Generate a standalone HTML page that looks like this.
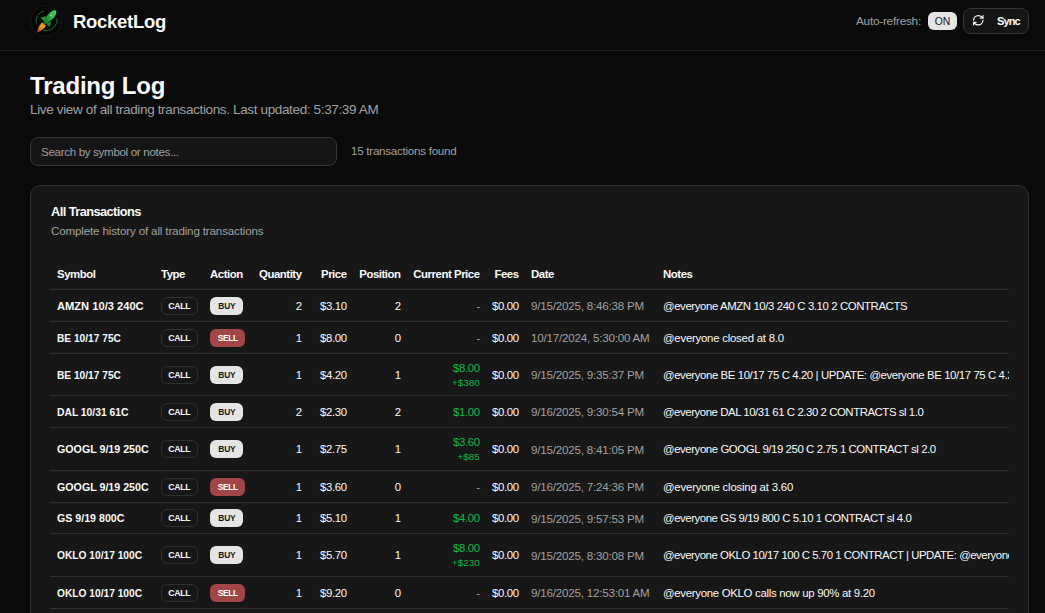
<!DOCTYPE html>
<html><head><meta charset="utf-8">
<style>
*{box-sizing:border-box;margin:0;padding:0}
html,body{width:1045px;height:613px;overflow:hidden;background:#0a0a0a;color:#fafafa;font-family:"Liberation Sans",sans-serif}
.abs{position:absolute;white-space:nowrap}
#hdr{position:absolute;left:0;top:0;width:1045px;height:51px;border-bottom:1px solid #222}
#logo{position:absolute;left:30px;top:5px;width:32px;height:32px}
#brand{left:73px;top:10px;font-size:18.5px;font-weight:700;line-height:24px;letter-spacing:-0.3px}
#auto{left:856px;top:13px;font-size:11.8px;color:#a1a1a1;line-height:16px;letter-spacing:-0.25px}
#on{position:absolute;left:928px;top:12px;width:29px;height:18px;border-radius:6px;background:#e5e5e5;color:#171717;font-size:10.4px;line-height:19px;text-align:center}
#sync{position:absolute;left:963px;top:8px;width:66px;height:26px;border-radius:8px;background:#151515;border:1px solid #343635}
#sync svg{position:absolute;left:8px;top:5px}
#sync span{position:absolute;left:33px;top:4px;font-size:11px;font-weight:700;line-height:16px;letter-spacing:-0.9px}
#title{left:30px;top:72px;font-size:24px;font-weight:700;line-height:28px;letter-spacing:-0.2px}
#sub{left:30px;top:101px;font-size:13.5px;color:#a1a1a1;line-height:18px;letter-spacing:-0.355px}
#search{position:absolute;left:30px;top:137px;width:307px;height:29px;border-radius:8px;background:#151515;border:1px solid #373938}
#search span{position:absolute;left:10px;top:7px;font-size:11.6px;color:#a1a1a1;line-height:14px;letter-spacing:-0.33px}
#found{left:351px;top:144px;font-size:11.6px;color:#a1a1a1;line-height:14px;letter-spacing:-0.26px}
#card{position:absolute;left:30px;top:185px;width:999px;height:600px;border-radius:11px;background:#171717;border:1px solid #303231}
#ct{left:51px;top:204px;font-size:12.8px;font-weight:700;line-height:16px;letter-spacing:-0.56px}
#cs{left:51px;top:224px;font-size:11.6px;color:#a1a1a1;line-height:14px;letter-spacing:-0.15px}
#tbl{position:absolute;left:50px;top:258px;width:959px;height:355px;overflow:hidden}
.row{position:absolute;left:0;width:959px;border-bottom:1px solid #2e302f}
.c{position:absolute;top:1px;bottom:1px;display:flex;align-items:center;white-space:nowrap;font-size:11.4px;letter-spacing:-0.38px}
.r{justify-content:flex-end;text-align:right}
.h .c{font-weight:700;font-size:11.4px;letter-spacing:-0.45px}
.sym{font-weight:700;font-size:11.8px;letter-spacing:0}
.sym b{display:inline-block;transform-origin:0 50%;font-weight:700}
.badge{display:inline-block;height:18px;line-height:18px;border-radius:6px;font-size:8.6px;text-align:center}
.call{width:37px;border:1px solid #303030;line-height:15px;font-weight:700;font-size:9.8px}
.call i{transform:scaleX(0.89)}
.buy{width:33px;background:#e5e5e5;color:#171717;font-size:9.8px;font-weight:700;line-height:17px}
.buy i{transform:scaleX(0.86)}
.sell{width:35px;background:#a24547;color:#fff;font-weight:700;font-size:9.8px;line-height:17px}
.sell i{transform:scaleX(0.85)}
.badge i{display:inline-block;font-style:normal}
.mut{color:#a1a1a1}
.dt{font-size:11.6px;letter-spacing:-0.21px}
.g{color:#12b84a}
.two{flex-direction:column;align-items:flex-end;justify-content:center}
.two .a{line-height:15px}
.two .b{font-size:9.8px;line-height:13px;letter-spacing:0}
</style></head><body>
<div id="hdr"></div>
<svg id="logo" viewBox="0 0 32 32">
  <defs>
    <linearGradient id="rb" x1="0" y1="1" x2="1" y2="0"><stop offset="0" stop-color="#126a22"/><stop offset="0.5" stop-color="#28a83e"/><stop offset="1" stop-color="#5cd06c"/></linearGradient>
    <linearGradient id="fl" x1="0" y1="1" x2="1" y2="0"><stop offset="0" stop-color="#b02a18"/><stop offset="0.45" stop-color="#e08a2c"/><stop offset="1" stop-color="#f0b848"/></linearGradient>
  </defs>
  <circle cx="16" cy="16" r="15.5" fill="#050706"/>
  <path d="M16 0.5 A15.5 15.5 0 0 0 16 31.5" fill="none" stroke="#2e1818" stroke-width="0.8"/>
  <path d="M16 0.5 A15.5 15.5 0 0 1 16 31.5" fill="none" stroke="#181830" stroke-width="0.8"/>
  <path d="M6.3 18.5 A10.5 10.5 0 0 1 14 6" fill="none" stroke="#16702a" stroke-width="1"/>
  <path d="M27 13 A10.8 10.8 0 0 1 12.5 24.8" fill="none" stroke="#16702a" stroke-width="1"/>
  <path d="M7 27.5 Q8 21.5 12 17.5 L16 20.5 Q13 25.5 7 27.5 Z" fill="url(#fl)"/>
  <path d="M10.5 13 L16 11 L14.5 16.5 Z" fill="#1e9834"/>
  <path d="M16 18.5 L21.5 16.5 L19.5 22 Z" fill="#18842c"/>
  <path d="M13 19.5 Q14.5 12.5 20 7.5 Q23.5 4.5 26 5.5 Q27 8 24.5 12 Q19.5 18 13 19.5 Z" fill="url(#rb)"/>
  <path d="M15 16 L22 9" stroke="#0d4a18" stroke-width="0.6" opacity="0.6"/>
  <circle cx="21" cy="10.5" r="1" fill="#a8e4ae"/>
</svg>
<div id="brand" class="abs">RocketLog</div>
<div id="auto" class="abs">Auto-refresh:</div>
<div id="on">ON</div>
<div id="sync">
  <svg width="12.5" height="12.5" viewBox="0 0 24 24" fill="none" stroke="#fafafa" stroke-width="2.3" stroke-linecap="round" stroke-linejoin="round"><path d="M3 12a9 9 0 0 1 9-9 9.75 9.75 0 0 1 6.74 2.74L21 8"/><path d="M21 3v5h-5"/><path d="M21 12a9 9 0 0 1-9 9 9.75 9.75 0 0 1-6.74-2.74L3 16"/><path d="M8 16H3v5"/></svg>
  <span>Sync</span>
</div>
<div id="title" class="abs">Trading Log</div>
<div id="sub" class="abs">Live view of all trading transactions. Last updated: 5:37:39 AM</div>
<div id="search"><span>Search by symbol or notes...</span></div>
<div id="found" class="abs">15 transactions found</div>
<div id="card"></div>
<div id="ct" class="abs">All Transactions</div>
<div id="cs" class="abs">Complete history of all trading transactions</div>
<div id="tbl">
<div class="row h" style="top:0px;height:32px"><div class="c" style="left:7px;width:98px">Symbol</div><div class="c" style="left:111px;width:43px">Type</div><div class="c" style="left:160px;width:41px">Action</div><div class="c r" style="left:201px;width:57px;padding-right:6.4px">Quantity</div><div class="c r" style="left:258px;width:45px;padding-right:6.4px">Price</div><div class="c r" style="left:303px;width:54px;padding-right:6.4px">Position</div><div class="c r" style="left:357px;width:79px;padding-right:6.4px">Current Price</div><div class="c r" style="left:436px;width:39px;padding-right:6.4px">Fees</div><div class="c" style="left:481px;width:126px">Date</div><div class="c" style="left:613px;width:600px">Notes</div></div>
<div class="row" style="top:32px;height:32px"><div class="c sym" style="left:7px;width:98px"><b style="transform:scaleX(0.944)">AMZN 10/3 240C</b></div><div class="c" style="left:111px;width:43px"><span class="badge call"><i>CALL</i></span></div><div class="c" style="left:160px;width:41px"><span class="badge buy"><i>BUY</i></span></div><div class="c r" style="left:201px;width:57px;padding-right:6.4px">2</div><div class="c r" style="left:258px;width:45px;padding-right:6.4px">$3.10</div><div class="c r" style="left:303px;width:54px;padding-right:6.4px">2</div><div class="c r mut" style="left:357px;width:79px;padding-right:6.4px">-</div><div class="c r" style="left:436px;width:39px;padding-right:6.4px">$0.00</div><div class="c mut dt" style="left:481px;width:126px">9/15/2025, 8:46:38 PM</div><div class="c" style="left:613px;width:600px"><span style="letter-spacing:-0.4px">@everyone AMZN 10/3 240 C 3.10 2 CONTRACTS</span></div></div>
<div class="row" style="top:64px;height:32px"><div class="c sym" style="left:7px;width:98px"><b style="transform:scaleX(0.862)">BE 10/17 75C</b></div><div class="c" style="left:111px;width:43px"><span class="badge call"><i>CALL</i></span></div><div class="c" style="left:160px;width:41px"><span class="badge sell"><i>SELL</i></span></div><div class="c r" style="left:201px;width:57px;padding-right:6.4px">1</div><div class="c r" style="left:258px;width:45px;padding-right:6.4px">$8.00</div><div class="c r" style="left:303px;width:54px;padding-right:6.4px">0</div><div class="c r mut" style="left:357px;width:79px;padding-right:6.4px">-</div><div class="c r" style="left:436px;width:39px;padding-right:6.4px">$0.00</div><div class="c mut dt" style="left:481px;width:126px">10/17/2024, 5:30:00 AM</div><div class="c" style="left:613px;width:600px"><span style="letter-spacing:-0.235px">@everyone closed at 8.0</span></div></div>
<div class="row" style="top:96px;height:42px"><div class="c sym" style="left:7px;width:98px"><b style="transform:scaleX(0.862)">BE 10/17 75C</b></div><div class="c" style="left:111px;width:43px"><span class="badge call"><i>CALL</i></span></div><div class="c" style="left:160px;width:41px"><span class="badge buy"><i>BUY</i></span></div><div class="c r" style="left:201px;width:57px;padding-right:6.4px">1</div><div class="c r" style="left:258px;width:45px;padding-right:6.4px">$4.20</div><div class="c r" style="left:303px;width:54px;padding-right:6.4px">1</div><div class="c r g two" style="left:357px;width:79px;padding-right:6.4px"><span class="a">$8.00</span><span class="b">+$380</span></div><div class="c r" style="left:436px;width:39px;padding-right:6.4px">$0.00</div><div class="c mut dt" style="left:481px;width:126px">9/15/2025, 9:35:37 PM</div><div class="c" style="left:613px;width:600px"><span style="letter-spacing:-0.4px">@everyone BE 10/17 75 C 4.20 | UPDATE: @everyone BE 10/17 75 C 4.20 2 CONTRACTS</span></div></div>
<div class="row" style="top:138px;height:32px"><div class="c sym" style="left:7px;width:98px"><b style="transform:scaleX(0.874)">DAL 10/31 61C</b></div><div class="c" style="left:111px;width:43px"><span class="badge call"><i>CALL</i></span></div><div class="c" style="left:160px;width:41px"><span class="badge buy"><i>BUY</i></span></div><div class="c r" style="left:201px;width:57px;padding-right:6.4px">2</div><div class="c r" style="left:258px;width:45px;padding-right:6.4px">$2.30</div><div class="c r" style="left:303px;width:54px;padding-right:6.4px">2</div><div class="c r g" style="left:357px;width:79px;padding-right:6.4px">$1.00</div><div class="c r" style="left:436px;width:39px;padding-right:6.4px">$0.00</div><div class="c mut dt" style="left:481px;width:126px">9/16/2025, 9:30:54 PM</div><div class="c" style="left:613px;width:600px"><span style="letter-spacing:-0.44px">@everyone DAL 10/31 61 C 2.30 2 CONTRACTS sl 1.0</span></div></div>
<div class="row" style="top:170px;height:43px"><div class="c sym" style="left:7px;width:98px"><b style="transform:scaleX(0.904)">GOOGL 9/19 250C</b></div><div class="c" style="left:111px;width:43px"><span class="badge call"><i>CALL</i></span></div><div class="c" style="left:160px;width:41px"><span class="badge buy"><i>BUY</i></span></div><div class="c r" style="left:201px;width:57px;padding-right:6.4px">1</div><div class="c r" style="left:258px;width:45px;padding-right:6.4px">$2.75</div><div class="c r" style="left:303px;width:54px;padding-right:6.4px">1</div><div class="c r g two" style="left:357px;width:79px;padding-right:6.4px"><span class="a">$3.60</span><span class="b">+$85</span></div><div class="c r" style="left:436px;width:39px;padding-right:6.4px">$0.00</div><div class="c mut dt" style="left:481px;width:126px">9/15/2025, 8:41:05 PM</div><div class="c" style="left:613px;width:600px"><span style="letter-spacing:-0.42px">@everyone GOOGL 9/19 250 C 2.75 1 CONTRACT sl 2.0</span></div></div>
<div class="row" style="top:213px;height:32px"><div class="c sym" style="left:7px;width:98px"><b style="transform:scaleX(0.904)">GOOGL 9/19 250C</b></div><div class="c" style="left:111px;width:43px"><span class="badge call"><i>CALL</i></span></div><div class="c" style="left:160px;width:41px"><span class="badge sell"><i>SELL</i></span></div><div class="c r" style="left:201px;width:57px;padding-right:6.4px">1</div><div class="c r" style="left:258px;width:45px;padding-right:6.4px">$3.60</div><div class="c r" style="left:303px;width:54px;padding-right:6.4px">0</div><div class="c r mut" style="left:357px;width:79px;padding-right:6.4px">-</div><div class="c r" style="left:436px;width:39px;padding-right:6.4px">$0.00</div><div class="c mut dt" style="left:481px;width:126px">9/16/2025, 7:24:36 PM</div><div class="c" style="left:613px;width:600px"><span style="letter-spacing:-0.2px">@everyone closing at 3.60</span></div></div>
<div class="row" style="top:245px;height:31px"><div class="c sym" style="left:7px;width:98px"><b style="transform:scaleX(0.902)">GS 9/19 800C</b></div><div class="c" style="left:111px;width:43px"><span class="badge call"><i>CALL</i></span></div><div class="c" style="left:160px;width:41px"><span class="badge buy"><i>BUY</i></span></div><div class="c r" style="left:201px;width:57px;padding-right:6.4px">1</div><div class="c r" style="left:258px;width:45px;padding-right:6.4px">$5.10</div><div class="c r" style="left:303px;width:54px;padding-right:6.4px">1</div><div class="c r g" style="left:357px;width:79px;padding-right:6.4px">$4.00</div><div class="c r" style="left:436px;width:39px;padding-right:6.4px">$0.00</div><div class="c mut dt" style="left:481px;width:126px">9/15/2025, 9:57:53 PM</div><div class="c" style="left:613px;width:600px"><span style="letter-spacing:-0.435px">@everyone GS 9/19 800 C 5.10 1 CONTRACT sl 4.0</span></div></div>
<div class="row" style="top:276px;height:43px"><div class="c sym" style="left:7px;width:98px"><b style="transform:scaleX(0.865)">OKLO 10/17 100C</b></div><div class="c" style="left:111px;width:43px"><span class="badge call"><i>CALL</i></span></div><div class="c" style="left:160px;width:41px"><span class="badge buy"><i>BUY</i></span></div><div class="c r" style="left:201px;width:57px;padding-right:6.4px">1</div><div class="c r" style="left:258px;width:45px;padding-right:6.4px">$5.70</div><div class="c r" style="left:303px;width:54px;padding-right:6.4px">1</div><div class="c r g two" style="left:357px;width:79px;padding-right:6.4px"><span class="a">$8.00</span><span class="b">+$230</span></div><div class="c r" style="left:436px;width:39px;padding-right:6.4px">$0.00</div><div class="c mut dt" style="left:481px;width:126px">9/15/2025, 8:30:08 PM</div><div class="c" style="left:613px;width:600px"><span style="letter-spacing:-0.46px">@everyone OKLO 10/17 100 C 5.70 1 CONTRACT | UPDATE: @everyone OKLO calls now up</span></div></div>
<div class="row" style="top:319px;height:32px"><div class="c sym" style="left:7px;width:98px"><b style="transform:scaleX(0.865)">OKLO 10/17 100C</b></div><div class="c" style="left:111px;width:43px"><span class="badge call"><i>CALL</i></span></div><div class="c" style="left:160px;width:41px"><span class="badge sell"><i>SELL</i></span></div><div class="c r" style="left:201px;width:57px;padding-right:6.4px">1</div><div class="c r" style="left:258px;width:45px;padding-right:6.4px">$9.20</div><div class="c r" style="left:303px;width:54px;padding-right:6.4px">0</div><div class="c r mut" style="left:357px;width:79px;padding-right:6.4px">-</div><div class="c r" style="left:436px;width:39px;padding-right:6.4px">$0.00</div><div class="c mut dt" style="left:481px;width:126px">9/16/2025, 12:53:01 AM</div><div class="c" style="left:613px;width:600px"><span style="letter-spacing:-0.29px">@everyone OKLO calls now up 90% at 9.20</span></div></div>
<div class="row" style="top:351px;height:32px"><div class="c sym" style="left:7px;width:98px"><b style="transform:scaleX(0.865)">OKLO 10/17 100C</b></div><div class="c" style="left:111px;width:43px"><span class="badge call"><i>CALL</i></span></div><div class="c" style="left:160px;width:41px"><span class="badge buy"><i>BUY</i></span></div><div class="c r" style="left:201px;width:57px;padding-right:6.4px">1</div><div class="c r" style="left:258px;width:45px;padding-right:6.4px">$5.70</div><div class="c r" style="left:303px;width:54px;padding-right:6.4px">1</div><div class="c r mut" style="left:357px;width:79px;padding-right:6.4px">-</div><div class="c r" style="left:436px;width:39px;padding-right:6.4px">$0.00</div><div class="c mut dt" style="left:481px;width:126px">9/15/2025, 8:30:08 PM</div><div class="c" style="left:613px;width:600px"><span style="letter-spacing:-0.4px">@everyone</span></div></div>
</div>
</body></html>
